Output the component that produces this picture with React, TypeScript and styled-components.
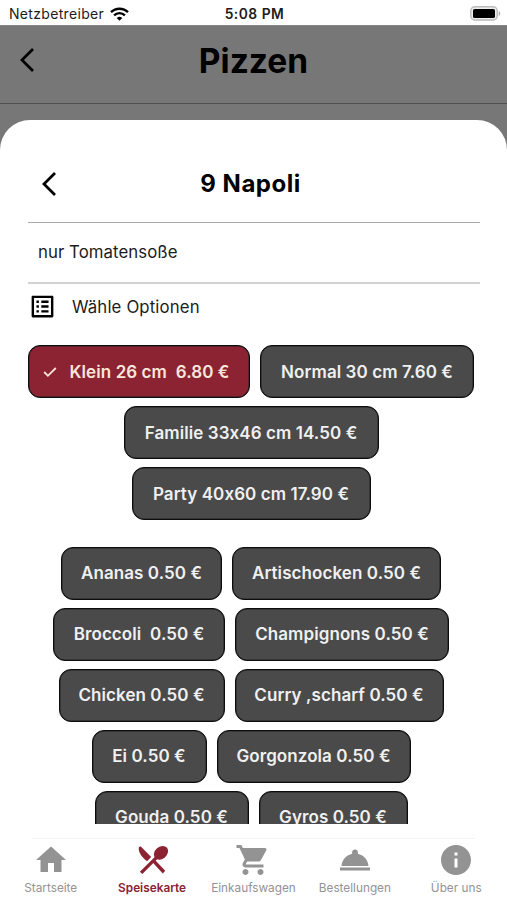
import React from 'react';
import styled, { createGlobalStyle } from 'styled-components';
import { MdHome, MdInfo, MdListAlt, MdRoomService, MdShoppingCart } from 'react-icons/md';

const GlobalStyle = createGlobalStyle`
  * { box-sizing: border-box; }
  body {
    margin: 0;
    background: #fff;
    font-family: Inter, "Liberation Sans", sans-serif;
    font-feature-settings: "calt" 0;
    color: #1c1c1c;
  }
`;

const Screen = styled.div`
  width: 507px;
  height: 900px;
  display: flex;
  flex-direction: column;
  overflow: hidden;
  background: #fff;
`;

const StatusBar = styled.div`
  flex: none;
  height: 25px;
  display: grid;
  grid-template-columns: 1fr auto 1fr;
  align-items: center;
  padding: 2px 6px 0 9px;
  font-size: 14px;
  line-height: 20px;
`;

const Carrier = styled.div`
  display: flex;
  align-items: center;
  gap: 6px;
  letter-spacing: 0.32px;
`;

const Clock = styled.div`
  font-weight: 600;
  font-size: 13.8px;
  letter-spacing: 0.5px;
  margin-right: 1px;
`;

const BatterySlot = styled.div`
  display: flex;
  justify-content: flex-end;
`;

const Backdrop = styled.div`
  flex: none;
  height: 125px;
  background: #777;
  border-top: 1px solid #858585;
`;

const PageHeader = styled.header`
  height: 78px;
  display: grid;
  grid-template-columns: 60px 1fr 60px;
  align-items: center;
  padding-bottom: 9px;
  border-bottom: 1px solid #505050;
`;

const PageTitle = styled.h1`
  margin: 0;
  padding-top: 2px;
  text-align: center;
  font-size: 33.5px;
  line-height: 40px;
  font-weight: 700;
  color: #000;
`;

const BackButton = styled.button<{ $indent: number }>`
  display: flex;
  padding: 0 0 0 ${(p) => p.$indent}px;
  border: 0;
  background: none;
  color: #000;
`;

const Sheet = styled.section`
  flex: none;
  height: 704px;
  margin-top: -30px;
  padding: 32px 27px 0 28px;
  display: flex;
  flex-direction: column;
  border-radius: 30px 30px 0 0;
  background: #fff;
  overflow: hidden;
`;

const SheetHeader = styled.div`
  flex: none;
  height: 71px;
  display: grid;
  grid-template-columns: 60px 1fr 67px;
  align-items: center;
  padding-bottom: 7px;
  border-bottom: 1px solid #aaa;
`;

const SheetTitle = styled.h2`
  margin: 0;
  text-align: center;
  font-size: 24px;
  line-height: 30px;
  font-weight: 700;
  letter-spacing: 0.5px;
  color: #000;
`;

const Description = styled.p`
  flex: none;
  height: 61px;
  margin: 0;
  padding: 0 10px;
  border-bottom: 2px solid #d2d2d2;
  font-size: 16.8px;
  line-height: 59px;
  letter-spacing: 0.06px;
`;

const OptionsHeading = styled.div`
  flex: none;
  height: 45px;
  display: flex;
  align-items: center;
  gap: 15px;
  font-size: 16.8px;
  letter-spacing: 0.13px;

  svg { color: #000; }
`;

const OptionScroller = styled.div`
  flex: 1;
  min-height: 0;
  margin-top: 16px;
  padding-right: 7px;
  overflow: hidden;
`;

const OptionGroup = styled.div`
  display: flex;
  flex-wrap: wrap;
  justify-content: center;
  gap: 8px 10px;
  margin: 0 -1px 26.5px 0;
`;

const OptionButton = styled.button<{ $width: number; $selected?: boolean }>`
  flex: none;
  display: flex;
  align-items: center;
  justify-content: center;
  gap: 13px;
  width: ${(p) => p.$width}px;
  height: 53px;
  padding: 0 ${(p) => (p.$selected ? 6 : 0)}px 0 0;
  border: 1px solid #0c0c0c;
  border-radius: 12px;
  box-shadow: inset 0 0 0 0.5px #222;
  background: ${(p) => (p.$selected ? '#8b2332' : '#4a4a4a')};
  color: ${(p) => (p.$selected ? '#f8e6dc' : '#f0f0f0')};
  font: 580 17px/22px Inter, "Liberation Sans", sans-serif;
  font-feature-settings: "calt" 0;
  letter-spacing: 0.08px;
  white-space: pre;
`;

const TabBar = styled.nav`
  flex: none;
  height: 76px;
  display: flex;
  flex-direction: column;
  align-items: center;
  padding-top: 14px;
  background: #fff;
`;

const TabDivider = styled.div`
  width: 443px;
  height: 1px;
  background: #f3f3f3;
`;

const TabList = styled.div`
  display: flex;
`;

const Tab = styled.a<{ $active?: boolean }>`
  flex: none;
  width: 101.4px;
  display: flex;
  flex-direction: column;
  align-items: center;
  padding-top: 3px;
  gap: 2px;
  color: ${(p) => (p.$active ? '#8b2332' : '#939393')};
  font-size: 11.8px;
  line-height: 16px;
  font-weight: ${(p) => (p.$active ? 570 : 400)};
  white-space: nowrap;
`;

type Option = { label: string; width: number; selected?: boolean };

const sizes: Option[] = [
  { label: 'Klein 26 cm  6.80 €', width: 222, selected: true },
  { label: 'Normal 30 cm 7.60 €', width: 214 },
  { label: 'Familie 33x46 cm 14.50 €', width: 255 },
  { label: 'Party 40x60 cm 17.90 €', width: 239 },
];

const toppings: Option[] = [
  { label: 'Ananas 0.50 €', width: 161 },
  { label: 'Artischocken 0.50 €', width: 209 },
  { label: 'Broccoli  0.50 €', width: 172 },
  { label: 'Champignons 0.50 €', width: 214 },
  { label: 'Chicken 0.50 €', width: 166 },
  { label: 'Curry ,scharf 0.50 €', width: 209 },
  { label: 'Ei 0.50 €', width: 115 },
  { label: 'Gorgonzola 0.50 €', width: 194 },
  { label: 'Gouda 0.50 €', width: 154 },
  { label: 'Gyros 0.50 €', width: 149 },
];

const Cutlery = ({ size }: { size: number }) => (
  <svg width={size} height={size} viewBox="0 0 36 36" fill="currentColor">
    <path d="M6.800 4.600 17.200 15 13 19.300C8.200 15.500 4.800 11.200 4.700 6.600c0-1.700.9-2.600 2.100-2Z" />
    <ellipse cx="27" cy="10.800" rx="7.800" ry="6" transform="rotate(-42 27 10.800)" />
    <path d="m21.500 14.200 2.300 2.300L8.300 32l-2.400-2.300Z" />
    <path d="m17.800 19.400 2.300-2.300L31.200 28.800 28.800 31.500Z" />
  </svg>
);

const tabs = [
  { label: 'Startseite', Icon: MdHome },
  { label: 'Speisekarte', Icon: Cutlery, active: true },
  { label: 'Einkaufswagen', Icon: MdShoppingCart },
  { label: 'Bestellungen', Icon: MdRoomService },
  { label: 'Über uns', Icon: MdInfo },
];

const Chevron = () => (
  <svg width="16" height="26" viewBox="0 0 16 26" fill="none" stroke="currentColor" strokeWidth="2.8">
    <path d="M14 2 3 13l11 11" />
  </svg>
);

const Check = () => (
  <svg width="14" height="12" viewBox="0 0 14 12" fill="none" stroke="currentColor" strokeWidth="1.8">
    <path d="m1.200 6 3.700 3.800L12.800 2" />
  </svg>
);

const Wifi = () => (
  <svg width="19" height="14" viewBox="0 0 19 14" fill="none" stroke="#000" strokeWidth="2.4">
    <path d="M1 5.200a12.100 12.100 0 0 1 17 0M4.100 8.300a7.700 7.700 0 0 1 10.800 0" />
    <path d="M9.500 13.800 6.700 11a4 4 0 0 1 5.600 0Z" fill="#000" stroke="none" />
  </svg>
);

const Battery = () => (
  <svg width="31" height="15" viewBox="0 0 31 15">
    <rect x="0.8" y="0.8" width="26.4" height="13.2" rx="4" fill="#eee" stroke="#bbb" strokeWidth="1.4" />
    <rect x="3" y="3" width="22" height="9" rx="1.6" fill="#000" />
    <path d="M28.700 5v5c2.200-1 2.200-4 0-5Z" fill="#b5b5b5" />
  </svg>
);

function Options({ items }: { items: Option[] }) {
  return (
    <OptionGroup>
      {items.map(({ label, width, selected }) => (
        <OptionButton key={label} $width={width} $selected={selected}>
          {selected && <Check />}
          {label}
        </OptionButton>
      ))}
    </OptionGroup>
  );
}

export default function App() {
  return (
    <>
      <GlobalStyle />
      <Screen>
        <StatusBar>
          <Carrier>Netzbetreiber <Wifi /></Carrier>
          <Clock>5:08 PM</Clock>
          <BatterySlot><Battery /></BatterySlot>
        </StatusBar>
        <Backdrop>
          <PageHeader>
            <BackButton $indent={19} aria-label="Zurück"><Chevron /></BackButton>
            <PageTitle>Pizzen</PageTitle>
          </PageHeader>
        </Backdrop>
        <Sheet>
          <SheetHeader>
            <BackButton $indent={13} aria-label="Zurück"><Chevron /></BackButton>
            <SheetTitle>9 Napoli</SheetTitle>
          </SheetHeader>
          <Description>nur Tomatensoße</Description>
          <OptionsHeading><MdListAlt size={29} />Wähle Optionen</OptionsHeading>
          <OptionScroller>
            <Options items={sizes} />
            <Options items={toppings} />
          </OptionScroller>
        </Sheet>
        <TabBar>
          <TabDivider />
          <TabList>
            {tabs.map(({ label, Icon, active }) => (
              <Tab key={label} $active={active}>
                <Icon size={36} />
                {label}
              </Tab>
            ))}
          </TabList>
        </TabBar>
      </Screen>
    </>
  );
}
